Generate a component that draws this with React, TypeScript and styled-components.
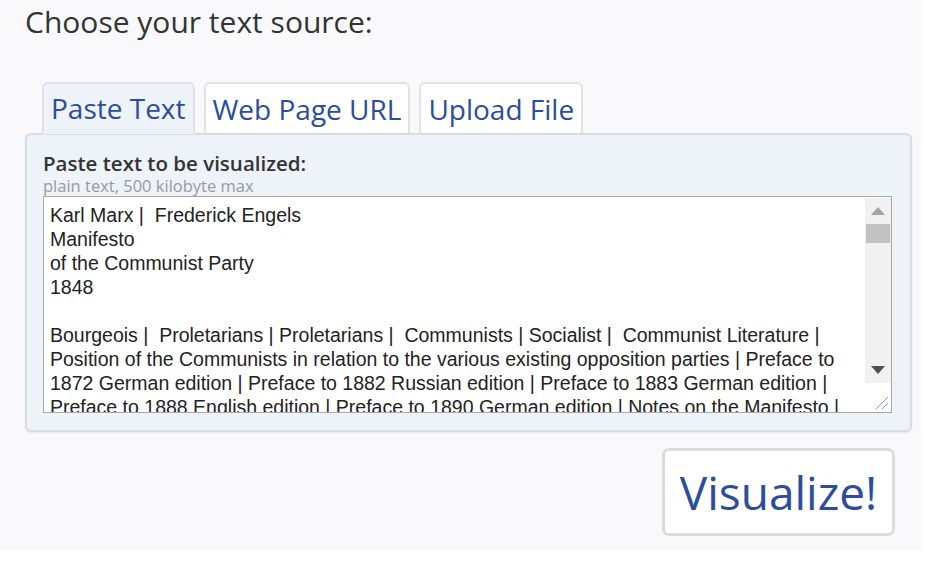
import styled, { createGlobalStyle } from 'styled-components';
import { useState } from 'react';

const GlobalStyle = createGlobalStyle`
  html, body {
    margin: 0;
    padding: 0;
    background: #ffffff;
  }
`;

const UI_FONT = `'Open Sans', 'DejaVu Sans', sans-serif`;

const Page = styled.div`
  width: 921px;
  height: 551px;
  box-sizing: border-box;
  background: #f9f9fb;
  padding: 0 9px 0 25px;
  font-family: ${UI_FONT};
  color: #333;
`;

const Heading = styled.h2`
  margin: 0;
  font-size: 30px;
  font-weight: 400;
  line-height: 44px;
  color: #333;
`;

const TabRow = styled.div`
  display: flex;
  gap: 9px;
  margin: 38px 0 0 17px;
`;

const Tab = styled.button<{ $active?: boolean }>`
  height: 52px;
  box-sizing: border-box;
  padding: 0 7px;
  margin-bottom: -1px;
  border: 2px solid #e0e2e6;
  border-bottom: ${(p) => (p.$active ? '2px solid #eef2f9' : '1px solid #d5d9de')};
  border-radius: 6px 6px 0 0;
  background: ${(p) => (p.$active ? '#eef2f9' : '#ffffff')};
  color: #2c4d9c;
  font-family: ${UI_FONT};
  font-size: 28px;
  line-height: 48px;
  cursor: pointer;
  position: relative;
  z-index: ${(p) => (p.$active ? 1 : 0)};
`;

const Panel = styled.div`
  box-sizing: border-box;
  height: 299px;
  background: #eef2f9;
  border: 2px solid #d9dde2;
  border-radius: 6px;
  box-shadow: 0 1px 2px rgba(0, 0, 0, 0.08);
  padding: 16px 17px 0 16px;
`;

const Label = styled.div`
  font-size: 20.5px;
  font-weight: 600;
  line-height: 25px;
  color: #333;
`;

const Hint = styled.div`
  font-size: 16.5px;
  line-height: 19px;
  color: #9a9a9a;
  margin-bottom: 1px;
`;

const Field = styled.div`
  display: flex;
  height: 217px;
  box-sizing: border-box;
  border: 1px solid #a9a9a9;
  background: #ffffff;
  margin-right: 1px;
`;

const TextBox = styled.textarea`
  flex: 1;
  border: none;
  outline: none;
  resize: none;
  overflow: hidden;
  white-space: pre;
  padding: 6px 6px;
  font-family: 'Liberation Sans', Arial, sans-serif;
  font-size: 19.5px;
  line-height: 24px;
  color: #222;
  background: transparent;
`;

const Scroll = styled.div`
  width: 26px;
  display: flex;
  flex-direction: column;
  padding-top: 1px;
`;

const Track = styled.div`
  flex: 1;
  background: #f1f1f1;
  display: flex;
  flex-direction: column;
  align-items: center;
`;

const Arrow = styled.div`
  height: 26px;
  display: flex;
  align-items: center;
  justify-content: center;
`;

const Thumb = styled.div`
  width: 24px;
  height: 19px;
  background: #c1c1c1;
`;

const Spacer = styled.div`
  flex: 1;
`;

const Corner = styled.div`
  height: 27px;
  display: flex;
  align-items: flex-end;
  justify-content: flex-end;
  padding: 0 2px 2px 0;
`;

const Actions = styled.div`
  display: flex;
  justify-content: flex-end;
  padding: 16px 17px 0 0;
`;

const Visualize = styled.button`
  width: 233px;
  height: 88px;
  box-sizing: border-box;
  background: #ffffff;
  border: 3px solid #dcdcdc;
  border-radius: 7px;
  color: #2c4d9c;
  font-family: ${UI_FONT};
  font-size: 46px;
  padding: 0;
  cursor: pointer;
`;

const SAMPLE = `Karl Marx |  Frederick Engels
Manifesto
of the Communist Party
1848

Bourgeois |  Proletarians | Proletarians |  Communists | Socialist |  Communist Literature |
Position of the Communists in relation to the various existing opposition parties | Preface to
1872 German edition | Preface to 1882 Russian edition | Preface to 1883 German edition |
Preface to 1888 English edition | Preface to 1890 German edition | Notes on the Manifesto |
`;

export default function App() {
  const [tab, setTab] = useState('paste');
  const [text, setText] = useState(SAMPLE);

  return (
    <>
      <GlobalStyle />
      <Page>
        <Heading>Choose your text source:</Heading>
        <TabRow>
          <Tab $active={tab === 'paste'} onClick={() => setTab('paste')}>
            Paste Text
          </Tab>
          <Tab $active={tab === 'url'} onClick={() => setTab('url')}>
            Web Page URL
          </Tab>
          <Tab $active={tab === 'file'} onClick={() => setTab('file')}>
            Upload File
          </Tab>
        </TabRow>
        <Panel>
          <Label>Paste text to be visualized:</Label>
          <Hint>plain text, 500 kilobyte max</Hint>
          <Field>
            <TextBox value={text} onChange={(e) => setText(e.target.value)} />
            <Scroll>
              <Track>
                <Arrow>
                  <svg width="14" height="8" viewBox="0 0 14 8">
                    <path d="M7 0 L14 8 L0 8 Z" fill="#a3a3a3" />
                  </svg>
                </Arrow>
                <Thumb />
                <Spacer />
                <Arrow>
                  <svg width="14" height="8" viewBox="0 0 14 8">
                    <path d="M0 0 L14 0 L7 8 Z" fill="#505050" />
                  </svg>
                </Arrow>
              </Track>
              <Corner>
                <svg width="16" height="16" viewBox="0 0 16 16">
                  <path d="M15 3 L3 15 M15 9 L9 15" stroke="#9a9a9a" strokeWidth="1" />
                </svg>
              </Corner>
            </Scroll>
          </Field>
        </Panel>
        <Actions>
          <Visualize>Visualize!</Visualize>
        </Actions>
      </Page>
    </>
  );
}
